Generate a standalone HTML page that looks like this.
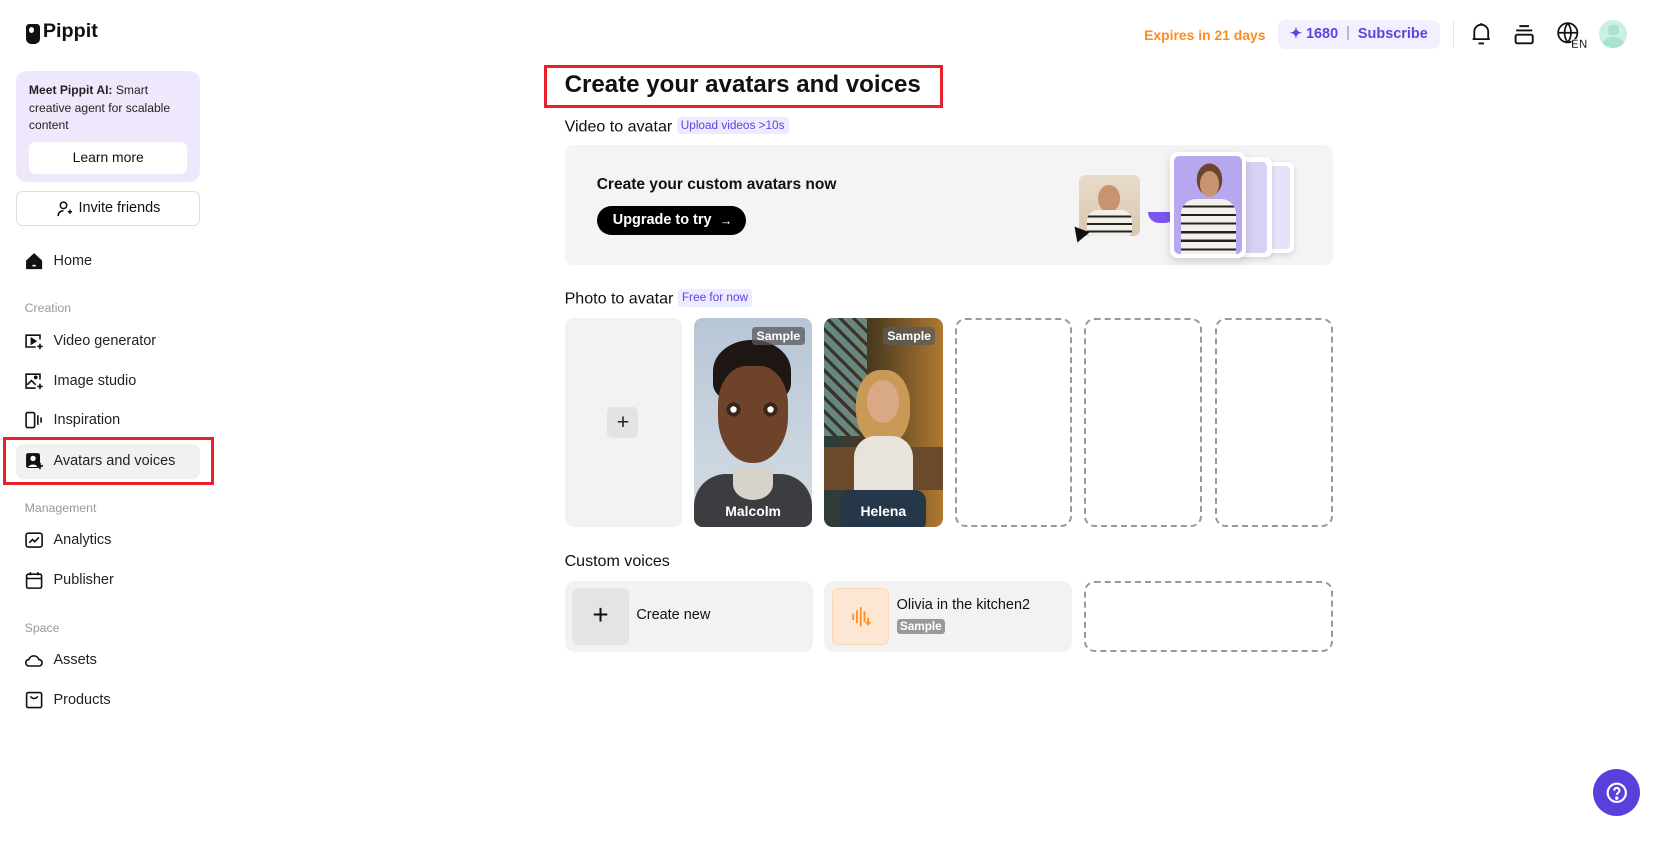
<!DOCTYPE html>
<html><head><meta charset="utf-8">
<style>
*{box-sizing:border-box;margin:0;padding:0}
html,body{width:1679px;height:846px;overflow:hidden;background:#fff}
#w{zoom:1.0713;width:1568px;height:790px;position:relative;font-family:"Liberation Sans",sans-serif;color:#111}
.abs{position:absolute}
.nav{position:absolute;left:23px;font-size:13.5px;color:#222;display:flex;align-items:center;gap:10px}
.nav svg{width:17px;height:17px}
.sec{position:absolute;left:23px;font-size:11.5px;color:#999}
.tag{display:inline-block;background:#ecebff;color:#5b45e0;font-size:11px;padding:2px 4px;border-radius:3px;margin-left:4px;vertical-align:2px}
.h2{position:absolute;left:527px;font-size:15px;color:#111}
.dash{position:absolute;border:2px dashed #999;border-radius:10px}
.samp{position:absolute;right:7px;top:8px;background:rgba(90,90,90,.75);color:#fff;font-size:11.5px;font-weight:bold;padding:2px 4px;border-radius:3px}
.nm{position:absolute;bottom:8px;width:100%;text-align:center;color:#fff;font-weight:bold;font-size:13px}
</style></head><body><div id="w">
<!-- logo -->
<div class="abs" style="left:24px;top:22px;width:13px;height:19px;background:#111;border-radius:3px 3px 5px 5px"></div>
<div class="abs" style="left:27px;top:25px;width:5px;height:6px;background:#fff;border-radius:50%"></div>
<div class="abs" style="left:40px;top:19px;font-size:18.5px;font-weight:bold">Pippit</div>
<!-- promo -->
<div class="abs" style="left:15px;top:66px;width:172px;height:104px;background:#efe8fd;border-radius:10px"></div>
<div class="abs" style="left:27px;top:77px;width:150px;font-size:11.3px;line-height:16px;color:#222"><b>Meet Pippit AI:</b> Smart creative agent for scalable content</div>
<div class="abs" style="left:27px;top:133px;width:148px;height:29px;background:#fff;border-radius:6px;font-size:13px;text-align:center;line-height:29px">Learn more</div>
<div class="abs" style="left:15px;top:178px;width:172px;height:33px;border:1px solid #ddd;border-radius:6px;font-size:13.5px;display:flex;align-items:center;justify-content:center;gap:5px">
<svg width="16" height="16" viewBox="0 0 16 16" fill="none" stroke="#111" stroke-width="1.4"><circle cx="7" cy="5" r="3"/><path d="M2 15c0-3 2-5 5-5M11 11h4M13 9v4"/></svg>Invite friends</div>
<div class="nav" style="top:235px"><svg viewBox="0 0 17 17"><path d="M1 8L8.5 1 16 8v8H1z" fill="#111"/><rect x="7" y="12" width="3" height="1.5" fill="#fff"/></svg>Home</div>
<div class="sec" style="top:281px">Creation</div>
<div class="nav" style="top:310px"><svg viewBox="0 0 17 17" fill="none" stroke="#111" stroke-width="1.5"><path d="M14 7V3H1v11h9"/><path d="M6 6l4 2.5-4 2.5z" fill="#111"/><path d="M14 11v5M11.5 13.5h5"/></svg>Video generator</div>
<div class="nav" style="top:347px"><svg viewBox="0 0 17 17" fill="none" stroke="#111" stroke-width="1.5"><path d="M14 7V2H1v13h9"/><path d="M2 12l4-4 4 4"/><circle cx="10" cy="5" r="1" fill="#111"/><path d="M14 11v5M11.5 13.5h5"/></svg>Image studio</div>
<div class="nav" style="top:384px"><svg viewBox="0 0 17 17" fill="none" stroke="#111" stroke-width="1.5"><rect x="1" y="1.5" width="8" height="14" rx="1.5"/><path d="M12 4v9M15 6v5"/></svg>Inspiration</div>
<div class="abs" style="left:15px;top:414px;width:172px;height:33px;background:#f1f1f1;border-radius:7px"></div>
<div class="abs" style="left:3px;top:408px;width:197px;height:45px;border:3px solid #e8202a"></div>
<div class="nav" style="top:422px"><svg viewBox="0 0 17 17"><rect x="1" y="1" width="13" height="14" rx="2" fill="#111"/><circle cx="7.5" cy="6" r="2.5" fill="#fff"/><path d="M3 14c1-3 8-3 9 0" fill="#fff"/><path d="M14 10v6M11 13h6" stroke="#111" stroke-width="1.6"/></svg>Avatars and voices</div>
<div class="sec" style="top:468px">Management</div>
<div class="nav" style="top:496px"><svg viewBox="0 0 17 17" fill="none" stroke="#111" stroke-width="1.5"><rect x="1" y="2" width="15" height="13" rx="2"/><path d="M4 11l3-3 2 2 4-4"/></svg>Analytics</div>
<div class="nav" style="top:533px"><svg viewBox="0 0 17 17" fill="none" stroke="#111" stroke-width="1.5"><rect x="1.5" y="3" width="14" height="13" rx="1.5"/><path d="M1.5 7h14M5 1v3M12 1v3"/></svg>Publisher</div>
<div class="sec" style="top:580px">Space</div>
<div class="nav" style="top:608px"><svg viewBox="0 0 17 17" fill="none" stroke="#111" stroke-width="1.5"><path d="M4 14h9a3 3 0 000-6 5 5 0 00-9.5 0A3 3 0 004 14z"/></svg>Assets</div>
<div class="nav" style="top:645px"><svg viewBox="0 0 17 17" fill="none" stroke="#111" stroke-width="1.5"><rect x="1.5" y="1.5" width="14" height="14" rx="1.5"/><path d="M5 5q3.5 4 7 0"/></svg>Products</div>

<!-- header right -->
<div class="abs" style="left:1068px;top:25px;font-size:13px;font-weight:bold;color:#ff8a1e">Expires in 21 days</div>
<div class="abs" style="left:1193px;top:19px;width:151px;height:27px;background:#f1f0fe;border-radius:7px;font-size:13.5px;font-weight:bold;color:#5b45e0;line-height:27px;padding-left:11px">✦ 1680 <span style="display:inline-block;width:1px;height:14px;background:#bbb;margin:0 5px;vertical-align:-2px"></span> Subscribe</div>
<div class="abs" style="left:1356px;top:20px;width:1px;height:24px;background:#e5e5e5"></div>
<svg class="abs" style="left:1372px;top:21px" width="21" height="22" viewBox="0 0 21 22" fill="none" stroke="#111" stroke-width="1.7"><path d="M4 16V9a6.5 6.5 0 0113 0v7H2.5h16"/><path d="M8 20h5M10.5 1v1.5"/></svg>
<svg class="abs" style="left:1413px;top:22px" width="19" height="20" viewBox="0 0 19 20" fill="none" stroke="#111" stroke-width="1.8"><path d="M5 2h9M2 6h15"/><rect x="1.5" y="10" width="16" height="8" rx="1.5"/></svg>
<svg class="abs" style="left:1452px;top:20px" width="30" height="26" viewBox="0 0 30 26" fill="none" stroke="#111" stroke-width="1.6"><circle cx="11" cy="11" r="9"/><path d="M2 11h18M11 2c-4 5-4 13 0 18M11 2c4 5 4 13 0 18"/><text x="14" y="25" font-size="11" font-weight="bold" fill="#111" stroke="#fff" stroke-width="0.5" font-family="Liberation Sans">EN</text></svg>
<div class="abs" style="left:1493px;top:19px;width:26px;height:26px;border-radius:50%;background:#c9f0e3;overflow:hidden"><div style="position:absolute;left:8px;top:4px;width:10px;height:10px;background:#a9e2cd;border-radius:3px"></div><div style="position:absolute;left:3px;top:16px;width:20px;height:14px;background:#a9e2cd;border-radius:50%"></div></div>

<!-- title -->
<div class="abs" style="left:508px;top:61px;width:372px;height:40px;border:3px solid #e8202a"></div>
<div class="abs" style="left:527px;top:66px;font-size:22.5px;font-weight:bold">Create your avatars and voices</div>
<div class="h2" style="top:109px">Video to avatar<span class="tag">Upload videos &gt;10s</span></div>
<div class="abs" style="left:527px;top:135px;width:717px;height:112px;background:#f4f4f4;border-radius:8px"></div>
<div class="abs" style="left:557px;top:164px;font-size:14.5px;font-weight:bold">Create your custom avatars now</div>
<div class="abs" style="left:557px;top:192px;width:139px;height:27px;background:#000;border-radius:14px;color:#fff;font-size:13.5px;font-weight:bold;display:flex;align-items:center;padding-left:15px">Upgrade to try&nbsp;&nbsp;<span style="font-weight:normal;font-size:12px">→</span></div>
<!-- illustration -->
<div class="abs" style="left:1007px;top:163px;width:57px;height:57px;border-radius:6px;background:linear-gradient(#e7dccb,#d9c7ad)"><div style="position:absolute;left:18px;top:10px;width:20px;height:25px;border-radius:50%;background:#c8946f"></div><div style="position:absolute;left:8px;top:33px;width:42px;height:24px;border-radius:10px 10px 4px 4px;background:repeating-linear-gradient(#f3f0ea 0 5px,#222 5px 7px)"></div></div>
<div class="abs" style="left:1000px;top:210px;width:0;height:0;border-left:8px solid transparent;border-right:8px solid transparent;border-bottom:14px solid #111;transform:rotate(-40deg)"></div>
<div class="abs" style="left:1072px;top:198px;width:26px;height:10px;border-radius:0 0 20px 20px;background:#7a56f0"></div>
<div class="abs" style="left:1178px;top:151px;width:30px;height:85px;background:#fff;border-radius:6px;box-shadow:0 2px 6px rgba(0,0,0,.12)"><div style="margin:4px;height:77px;background:#e7e2f8;border-radius:4px"></div></div>
<div class="abs" style="left:1155px;top:147px;width:32px;height:93px;background:#fff;border-radius:6px;box-shadow:0 2px 6px rgba(0,0,0,.12)"><div style="margin:4px;height:85px;background:#d9d0f6;border-radius:4px"></div></div>
<div class="abs" style="left:1092px;top:142px;width:71px;height:99px;background:#fff;border-radius:7px;box-shadow:0 3px 8px rgba(0,0,0,.15);padding:4px"><div style="position:relative;height:91px;background:#b7a7ee;border-radius:5px;overflow:hidden"><div style="position:absolute;left:24px;top:14px;width:18px;height:24px;border-radius:50%;background:#c8946f;box-shadow:0 -4px 0 3px #6b4430"></div><div style="position:absolute;left:6px;top:40px;width:52px;height:55px;border-radius:14px 14px 0 0;background:repeating-linear-gradient(#f3f0ea 0 6px,#222 6px 8px)"></div></div></div>

<div class="h2" style="top:270px">Photo to avatar<span class="tag">Free for now</span></div>
<div class="abs" style="left:527px;top:297px;width:110px;height:195px;background:#f2f2f2;border-radius:8px"></div>
<div class="abs" style="left:567px;top:380px;width:29px;height:29px;background:#e3e3e3;border-radius:5px;text-align:center;line-height:28px;font-size:20px;color:#222">+</div>
<div class="abs" style="left:648px;top:297px;width:110px;height:195px;border-radius:8px;overflow:hidden;background:linear-gradient(#b7c6d6,#d5dde4)">
<div style="position:absolute;left:18px;top:20px;width:72px;height:58px;border-radius:50% 50% 30% 30%;background:#1d1613"></div>
<div style="position:absolute;left:22px;top:45px;width:66px;height:90px;border-radius:40% 40% 48% 48%;background:#6e4329"></div>
<div style="position:absolute;left:30px;top:78px;width:14px;height:14px;border-radius:50%;background:#fff;box-shadow:inset 0 0 0 4px #3b2418"></div>
<div style="position:absolute;left:64px;top:78px;width:14px;height:14px;border-radius:50%;background:#fff;box-shadow:inset 0 0 0 4px #3b2418"></div>
<div style="position:absolute;left:0;top:145px;width:110px;height:60px;border-radius:30px 30px 0 0;background:#3c3d40"></div>
<div style="position:absolute;left:36px;top:140px;width:38px;height:30px;background:#d8d3ca;border-radius:0 0 50% 50%"></div>
<div class="samp">Sample</div><div class="nm">Malcolm</div></div>
<div class="abs" style="left:769px;top:297px;width:111px;height:195px;border-radius:8px;overflow:hidden;background:linear-gradient(90deg,#2a3c3c,#4a3a20 40%,#b07a30 100%)">
<div style="position:absolute;left:0;top:0;width:40px;height:110px;background:repeating-linear-gradient(45deg,#7ea6a4 0 6px,#3a3020 6px 9px);opacity:.7"></div>
<div style="position:absolute;left:0;top:120px;width:111px;height:40px;background:#6a4a2a"></div>
<div style="position:absolute;left:30px;top:48px;width:50px;height:70px;border-radius:45%;background:#c99a55"></div>
<div style="position:absolute;left:40px;top:58px;width:30px;height:40px;border-radius:50%;background:#d9a884"></div>
<div style="position:absolute;left:28px;top:110px;width:55px;height:60px;border-radius:20px 20px 5px 5px;background:#e8e4dc"></div>
<div style="position:absolute;left:15px;top:160px;width:80px;height:40px;background:#24384a;border-radius:10px"></div>
<div class="samp">Sample</div><div class="nm">Helena</div></div>
<div class="dash" style="left:891px;top:297px;width:110px;height:195px"></div>
<div class="dash" style="left:1012px;top:297px;width:110px;height:195px"></div>
<div class="dash" style="left:1134px;top:297px;width:110px;height:195px"></div>

<div class="h2" style="top:515px">Custom voices</div>
<div class="abs" style="left:527px;top:542px;width:232px;height:67px;background:#f2f2f2;border-radius:9px"></div>
<div class="abs" style="left:534px;top:549px;width:53px;height:53px;background:#e4e4e4;border-radius:6px;text-align:center;line-height:50px;font-size:26px;color:#111">+</div>
<div class="abs" style="left:594px;top:567px;font-size:13.5px">Create new</div>
<div class="abs" style="left:769px;top:542px;width:232px;height:67px;background:#f2f2f2;border-radius:9px"></div>
<div class="abs" style="left:777px;top:549px;width:53px;height:53px;background:#fde6d2;border:1px solid #fbd7b5;border-radius:6px"></div>
<svg class="abs" style="left:793px;top:565px" width="22" height="22" viewBox="0 0 22 22" stroke="#ff8a1e" stroke-width="1.6"><path d="M3 8v6M6.5 5v12M10 2v18M13.5 6v10M17 12v7M14.5 16.5h5"/></svg>
<div class="abs" style="left:837px;top:557px;font-size:13.5px">Olivia in the kitchen2</div>
<div class="abs" style="left:837px;top:578px;background:#999;color:#fff;font-size:11px;font-weight:bold;padding:1px 3px;border-radius:3px">Sample</div>
<div class="dash" style="left:1012px;top:542px;width:232px;height:67px"></div>

<div class="abs" style="left:1487px;top:718px;width:44px;height:44px;border-radius:50%;background:#5b3fdc"></div>
<svg class="abs" style="left:1498px;top:729px" width="22" height="22" viewBox="0 0 22 22" fill="none" stroke="#fff" stroke-width="2"><circle cx="11" cy="11" r="8.5"/><path d="M8.5 9a2.5 2.5 0 115 0c0 2-2.5 2-2.5 4"/><circle cx="11" cy="16" r=".6" fill="#fff"/></svg>
</div></body></html>
